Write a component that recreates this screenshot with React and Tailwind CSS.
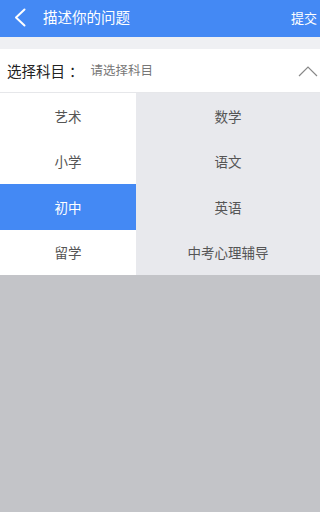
import React from 'react'

const LEFT = ['艺术', '小学', '初中', '留学']
const RIGHT = ['数学', '语文', '英语', '中考心理辅导']

export default function App() {
  const selected = 2
  return (
    <div
      className="w-[320px] h-[512px] flex flex-col bg-[#c3c4c8] overflow-hidden"
      style={{ fontFamily: '"Noto Sans CJK SC", "Noto Sans", sans-serif' }}
    >
      {/* header */}
      <div className="h-[37px] bg-[#4489f4] flex items-center text-white shrink-0 pb-[3px]">
        <svg className="ml-[14px] w-[12px] h-[19px]" viewBox="0 0 12 19" fill="none">
          <path d="M10.5 1.5 L2 9.5 L10.5 17.5" stroke="white" strokeWidth="2" strokeLinecap="round" strokeLinejoin="round" />
        </svg>
        <span className="ml-[17px] text-[14.5px] leading-none">描述你的问题</span>
        <span className="ml-auto mr-[3px] text-[13px] leading-none">提交</span>
      </div>
      <div className="h-[12px] bg-[#eff0f3] shrink-0" />
      {/* subject row */}
      <div className="h-[44px] bg-white flex items-center border-b border-[#e6e7ea] shrink-0">
        <span className="ml-[7px] text-[14.5px] text-[#222]">选择科目</span>
        <span className="ml-[4px] text-[14.5px] text-[#222]">：</span>
        <span className="ml-[7px] text-[12.5px] text-[#777]">请选择科目</span>
        <svg className="ml-auto mr-[2px] w-[20px] h-[12px]" viewBox="0 0 20 12" fill="none">
          <path d="M1 11 L10 2 L19 11" stroke="#888" strokeWidth="1.2" />
        </svg>
      </div>
      {/* lists */}
      <div className="flex shrink-0">
        <div className="w-[136px] bg-white flex flex-col">
          {LEFT.map((t, i) => (
            <div
              key={t}
              className={
                'h-[45.5px] flex items-center justify-center text-[13.5px] ' +
                (i === selected ? 'bg-[#4489f4] text-white' : 'text-[#555]')
              }
            >
              {t}
            </div>
          ))}
        </div>
        <div className="flex-1 bg-[#e8e9ed] flex flex-col">
          {RIGHT.map((t) => (
            <div key={t} className="h-[45.5px] flex items-center justify-center text-[13.5px] text-[#555]">
              {t}
            </div>
          ))}
        </div>
      </div>
    </div>
  )
}
